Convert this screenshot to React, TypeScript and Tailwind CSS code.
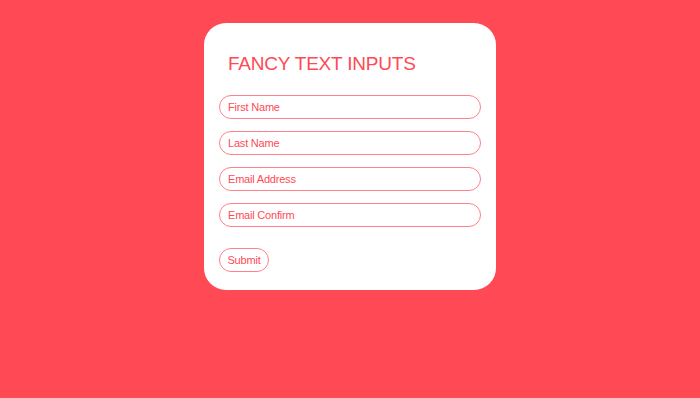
import React from "react";

const fields = ["First Name", "Last Name", "Email Address", "Email Confirm"];

export default function App() {
  return (
    <div
      className="min-h-[398px] w-full bg-[#ff4a55] flex justify-center pt-[23px]"
      style={{ fontFamily: '"Liberation Sans", Arial, sans-serif' }}
    >
      <div className="w-[292px] h-[267px] bg-white rounded-[22px] px-[15px] pt-[29px] flex flex-col">
        <h1 className="pl-[9px] text-[19px] leading-[24px] tracking-[-0.2px] text-[#ff4a55] font-normal">
          FANCY TEXT INPUTS
        </h1>

        <form className="mt-[19px] flex flex-col gap-[12px]" onSubmit={(e) => e.preventDefault()}>
          {fields.map((f) => (
            <input
              key={f}
              type="text"
              placeholder={f}
              className="h-[24px] w-full rounded-full border border-[#ff8088] px-[8px] text-[11px] tracking-[-0.2px] text-[#ff4a55] placeholder:text-[#ff4a55] outline-none"
            />
          ))}
          <button
            type="submit"
            className="mt-[9px] h-[24px] w-[50px] rounded-full border border-[#ff8088] text-[11px] tracking-[-0.2px] text-[#ff4a55] bg-white"
          >
            Submit
          </button>
        </form>
      </div>
    </div>
  );
}
